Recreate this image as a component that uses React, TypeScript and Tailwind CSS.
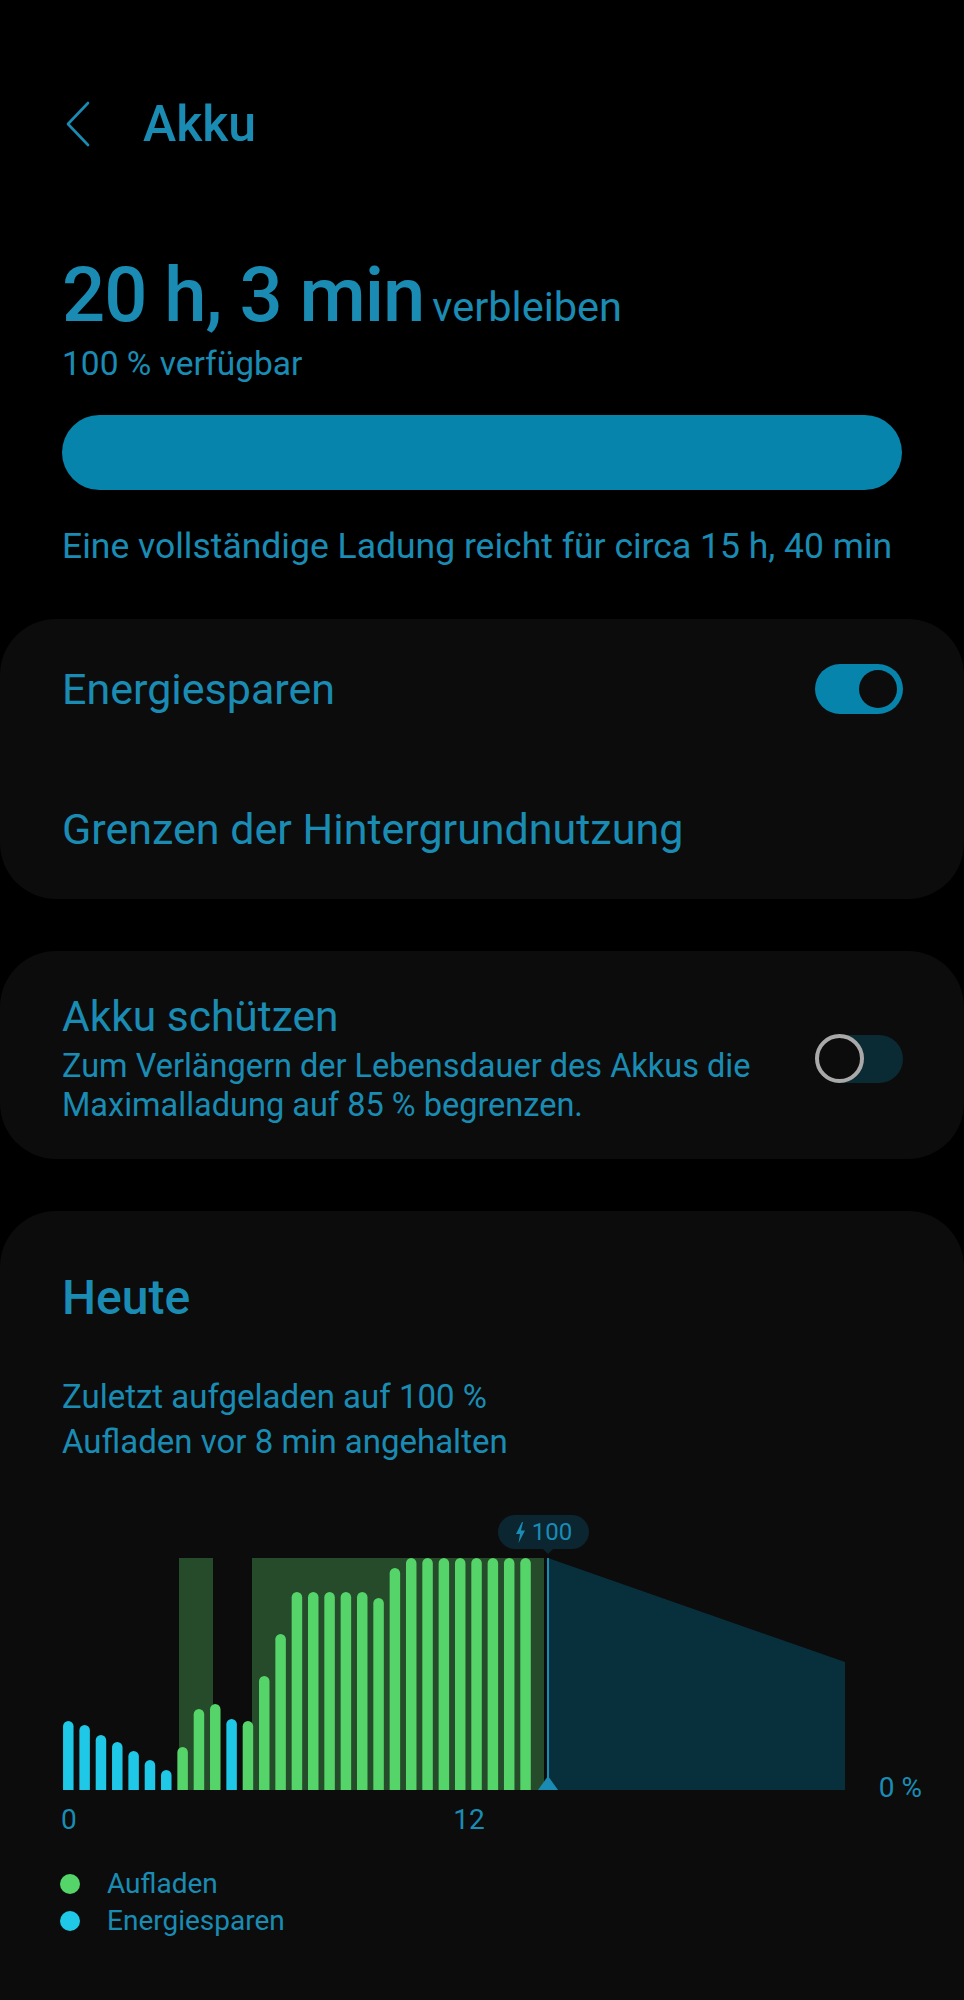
import React from 'react';

const BAR_HEIGHTS = [69, 65, 55, 48, 39, 30, 20, 43, 81, 86, 71, 69, 114, 156, 198, 198, 198, 198, 198, 192, 222, 232, 232, 232, 232, 232, 232, 232, 232];
const SAVER_BARS = [0, 1, 2, 3, 4, 5, 6, 10];
const BASE = 289;
const TOP = 57;

const barPath = (i: number, h: number) => {
  const cx = 68.3 + 16.33 * i;
  const r = 5.25;
  const x0 = cx - r;
  const x1 = cx + r;
  const top = BASE - h;
  return `M${x0} ${BASE} V${top + r} A${r} ${r} 0 0 1 ${x1} ${top + r} V${BASE} Z`;
};

const Chevron: React.FC = () => (
  <svg width="26" height="46" viewBox="0 0 26 46" fill="none">
    <path d="M23 2 L3 23 L23 44" stroke="#1a8cb4" strokeWidth="2.6" strokeLinecap="round" strokeLinejoin="round" />
  </svg>
);

const ToggleOn: React.FC = () => (
  <div className="relative w-[88px] h-[50px] rounded-full bg-[#0784ac] shrink-0">
    <div className="absolute right-[6px] top-[6px] w-[38px] h-[38px] rounded-full bg-[#0c0c0c]" />
  </div>
);

const ToggleOff: React.FC = () => (
  <div className="relative w-[88px] h-[50px] shrink-0 flex items-center">
    <div className="absolute left-[1px] right-0 top-[1px] h-[48px] rounded-full bg-[#0a2a34]" />
    <div className="relative w-[49px] h-[49px] rounded-full border-[4.5px] border-[#a9a9a9] bg-[#0c0c0c]" />
  </div>
);

const UsageChart: React.FC = () => (
  <div className="relative h-[340px] w-full">
    <svg className="absolute left-0 top-0" width="964" height="340" viewBox="0 0 964 340">
      <rect x="179" y={TOP} width="34" height={BASE - TOP} fill="#254b2a" />
      <rect x="252" y={TOP} width="292" height={BASE - TOP} fill="#254b2a" />
      <polygon points={`548,${TOP} 845,161 845,${BASE} 548,${BASE}`} fill="#08303c" />
      {BAR_HEIGHTS.map((h, i) => (
        <path key={i} d={barPath(i, h)} fill={SAVER_BARS.includes(i) ? '#1fc8e6' : '#55d46a'} />
      ))}
      <rect x="547" y={TOP} width="2" height={BASE - TOP} fill="#1a8cb4" />
      <polygon points={`538,${BASE} 558,${BASE} 548,${BASE - 14}`} fill="#1a8cb4" />
      <polygon points="543,48 553,48 548,53" fill="#0b2630" />
    </svg>

    {/* charge badge */}
    <div className="absolute left-[498px] top-[14px] w-[91px] h-[34px] rounded-full bg-[#0b2630] flex items-center justify-center gap-[6px]">
      <svg width="11" height="21" viewBox="0 0 11 21">
        <path d="M7 0 L1 12 H5 L3.5 21 L10 8.5 H6 L8 0 Z" fill="#1a8cb4" />
      </svg>
      <span className="text-[24px] leading-[28px] text-[#1a8cb4]">100</span>
    </div>

    <span className="absolute right-[42px] top-[271px] text-[28px] leading-[32px]">0 %</span>
    <span className="absolute left-[61px] top-[303px] text-[28px] leading-[32px]">0</span>
    <span className="absolute left-[469px] top-[303px] -translate-x-1/2 text-[28px] leading-[32px]">12</span>
  </div>
);

const LegendRow: React.FC<{ color: string; label: string }> = ({ color, label }) => (
  <div className="flex items-center h-[37px]">
    <div className="w-[20px] h-[20px] rounded-full" style={{ backgroundColor: color }} />
    <span className="ml-[27px] text-[28px] leading-[37px]">{label}</span>
  </div>
);

const App: React.FC = () => {
  return (
    <div className="w-[964px] min-h-[2000px] bg-black font-[Roboto,sans-serif] text-[#1a8cb4] overflow-hidden">
      {/* Header */}
      <div className="pt-[94px] pl-[65px] flex items-center h-[154px]">
        <Chevron />
        <h1 className="ml-[52px] text-[50px] leading-[60px] font-medium">Akku</h1>
      </div>

      {/* Remaining time */}
      <div className="px-[62px]">
        <div className="mt-[101px] flex items-baseline h-[80px]">
          <span className="text-[76px] leading-[80px] font-medium tracking-[-1px]">20 h, 3 min</span>
          <span className="ml-[8px] text-[41.5px] leading-[48px]">verbleiben</span>
        </div>
        <p className="mt-[9px] text-[33.5px] leading-[40px]">100 % verfügbar</p>
        <div className="mt-[31px] h-[75px] rounded-full bg-[#0784ac]" />
        <p className="mt-[34px] text-[35.5px] leading-[44px] whitespace-nowrap">
          Eine vollständige Ladung reicht für circa 15 h, 40 min
        </p>
      </div>

      {/* Power saving card */}
      <div className="mt-[51px] rounded-[56px] bg-[#0c0c0c]">
        <div className="h-[140px] pl-[62px] pr-[61px] flex items-center justify-between">
          <span className="text-[43px] leading-[50px]">Energiesparen</span>
          <ToggleOn />
        </div>
        <div className="h-[140px] px-[62px] flex items-center">
          <span className="text-[43px] leading-[50px]">Grenzen der Hintergrundnutzung</span>
        </div>
      </div>

      {/* Protect battery card */}
      <div className="mt-[52px] rounded-[56px] bg-[#0c0c0c] pt-[41px] pb-[34px] pl-[62px] pr-[61px] flex items-center justify-between">
        <div>
          <h3 className="text-[42.5px] leading-[50px]">Akku schützen</h3>
          <p className="mt-[5px] w-[720px] text-[32.5px] leading-[39px]">
            Zum Verlängern der Lebensdauer des Akkus die Maximalladung auf 85 % begrenzen.
          </p>
        </div>
        <ToggleOff />
      </div>

      {/* Today card */}
      <div className="mt-[52px] rounded-t-[56px] bg-[#0c0c0c] pt-[59px] pb-[120px]">
        <h2 className="px-[62px] text-[48px] leading-[56px] font-medium">Heute</h2>
        <div className="mt-[48px] px-[62px] text-[33px] leading-[45px]">
          <p>Zuletzt aufgeladen auf 100 %</p>
          <p>Aufladen vor 8 min angehalten</p>
        </div>
        <div className="mt-[37px]">
          <UsageChart />
        </div>
        <div className="mt-[24px] px-[60px]">
          <LegendRow color="#55d46a" label="Aufladen" />
          <LegendRow color="#1fc8e6" label="Energiesparen" />
        </div>
      </div>
    </div>
  );
};

export default App;
